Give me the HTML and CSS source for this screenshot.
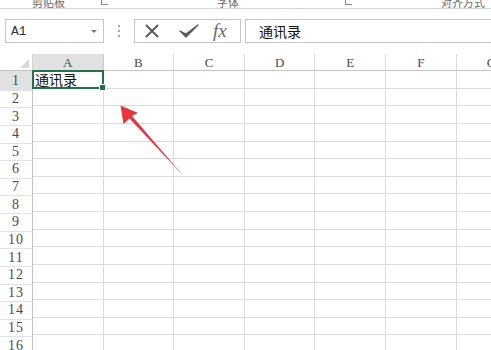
FILE: index.html
```html
<!DOCTYPE html>
<html>
<head>
<meta charset="utf-8">
<link rel="stylesheet" href="styles.css">
</head>
<body>
<div class="ribbon">
  <span class="grp g1">剪贴板</span>
  <span class="launch l1"></span>
  <span class="grp g2">字体</span>
  <span class="launch l2"></span>
  <span class="grp g3">对齐方式</span>
</div>
<div class="fbar">
  <div class="namebox"><span class="ref">A1</span><span class="dd"></span></div>
  <div class="dots"><i></i><i></i><i></i></div>
  <div class="btns">
    <svg class="ico-x" width="16" height="14" viewBox="0 0 16 14"><path d="M2 1 L14 13 M14 1 L2 13" stroke="#5a5a5a" stroke-width="2" fill="none"/></svg>
    <svg class="ico-ok" width="20" height="14" viewBox="0 0 20 14"><path d="M1 7 L7 13 L19 1 L7 10 Z" fill="#5a5a5a" stroke="#5a5a5a" stroke-width="1.2" stroke-linejoin="round"/></svg>
    <span class="fx">fx</span>
  </div>
  <div class="input">通讯录</div>
</div>
<div class="sheet">
  <div class="colhead">
    <div class="corner"><span class="tri"></span></div>
    <div class="ch sel">A</div>
    <div class="ch">B</div>
    <div class="ch">C</div>
    <div class="ch">D</div>
    <div class="ch">E</div>
    <div class="ch">F</div>
    <div class="ch">G</div>
  </div>
  <div class="body">
    <div class="rowhead">
      <div class="rh sel">1</div><div class="rh">2</div><div class="rh">3</div><div class="rh">4</div>
      <div class="rh">5</div><div class="rh">6</div><div class="rh">7</div><div class="rh">8</div>
      <div class="rh">9</div><div class="rh">10</div><div class="rh">11</div><div class="rh">12</div>
      <div class="rh">13</div><div class="rh">14</div><div class="rh">15</div><div class="rh">16</div>
    </div>
    <div class="cells">
      <div class="active">通讯录<span class="handle"></span></div>
    </div>
  </div>
</div>
<svg class="arrow" width="491" height="350" viewBox="0 0 491 350">
  <polygon points="120.5,105.5 123.5,124 129.5,118.5 183.5,176 132,116 138,113" fill="#e8343c"/>
</svg>
</body>
</html>
```
FILE: styles.css
```css
html, body {
  margin: 0;
  padding: 0;
}
body {
  width: 491px;
  height: 350px;
  overflow: hidden;
  background: #fff;
  position: relative;
  font-family: "Noto Sans CJK SC", "DejaVu Sans", sans-serif;
}
.ribbon {
  height: 8px;
  border-bottom: 1px solid #d6d6d6;
  position: relative;
  overflow: hidden;
  display: flex;
  align-items: flex-end;
}
.grp {
  font-size: 11px;
  line-height: 11px;
  color: #6a6a6a;
  margin-bottom: 0;
  white-space: nowrap;
}
.g1 { margin-left: 32px; }
.launch {
  width: 6px;
  height: 5px;
  border-left: 1px solid #888;
  border-bottom: 1px solid #888;
  margin-bottom: 3px;
}
.l1 { margin-left: 36px; }
.g2 { margin-left: 109px; }
.l2 { margin-left: 106px; }
.g3 { margin-left: 89px; }

.fbar {
  margin-top: 10px;
  height: 24px;
  display: flex;
  align-items: stretch;
}
.namebox {
  margin-left: 5px;
  width: 97px;
  border: 1px solid #c6c6c6;
  display: flex;
  align-items: center;
  justify-content: space-between;
}
.ref {
  font-family: "Liberation Mono", monospace;
  font-size: 13px;
  color: #333;
  margin-left: 5px;
}
.dd {
  width: 0;
  height: 0;
  border-left: 3px solid transparent;
  border-right: 3px solid transparent;
  border-top: 3px solid #777;
  margin-right: 6px;
}
.dots {
  width: 30px;
  display: flex;
  flex-direction: column;
  align-items: center;
  justify-content: center;
  gap: 3px;
}
.dots i {
  display: block;
  width: 2px;
  height: 2px;
  background: #a8a8a8;
}
.btns {
  width: 105px;
  border: 1px solid #c6c6c6;
  display: flex;
  align-items: center;
}
.ico-x { margin-left: 9px; }
.ico-ok { margin-left: 19px; }
.fx {
  margin-left: 14px;
  font-family: "Liberation Serif", serif;
  font-style: italic;
  font-size: 19px;
  color: #6a6a6a;
  line-height: 1;
  margin-top: -2px;
}
.input {
  margin-left: 4px;
  flex: 1;
  border: 1px solid #c6c6c6;
  border-right: none;
  font-size: 14px;
  color: #111;
  padding-left: 13px;
  display: flex;
  align-items: center;
}

.sheet {
  margin-top: 11px;
  overflow: hidden;
}
.colhead {
  height: 16px;
  display: flex;
  overflow: hidden;
  border-bottom: 1px solid #c4c4c4;
}
.corner {
  width: 32px;
  flex: none;
  border-right: 1px solid #d6d6d6;
  position: relative;
}
.tri {
  position: absolute;
  right: 3px;
  bottom: 2px;
  width: 0;
  height: 0;
  border-left: 9px solid transparent;
  border-bottom: 9px solid #d9d9d9;
}
.ch {
  flex: 0 0 69.6px;
  display: flex;
  justify-content: center;
  align-items: center;
  border-right: 1px solid #dcdcdc;
  font-family: "Liberation Serif", serif;
  font-size: 13px;
  color: #4a4a4a;
  padding-top: 2px;
  box-sizing: content-box;
}
.ch.sel {
  background: #e1e1e1;
  color: #2c5b41;
  border-right-color: #c8c8c8;
}
.body {
  display: flex;
}
.rowhead {
  width: 32px;
  border-right: 1px solid #c4c4c4;
  flex: none;
}
.rh {
  height: 16.625px;
  border-bottom: 1px solid #e2e2e2;
  display: flex;
  justify-content: center;
  align-items: center;
  padding-top: 2px;
  box-sizing: content-box;
  margin-bottom: -2px;
  font-family: "Liberation Serif", serif;
  font-size: 14px;
  color: #4a4a4a;
  letter-spacing: 1px;
}
.rh.sel {
  background: #e1e1e1;
  color: #2c5b41;
}
.cells {
  flex: 1;
  height: 290px;
  background:
    repeating-linear-gradient(to right, transparent 0 69.6px, #dadada 69.6px 70.6px),
    repeating-linear-gradient(to bottom, transparent 0 16.625px, #dadada 16.625px 17.625px);
}
.active {
  position: relative;
  width: 71.6px;
  height: 18.625px;
  margin-left: -1px;
  margin-top: -1px;
  box-sizing: border-box;
  border: 2px solid #217346;
  background: #fff;
  font-size: 14px;
  line-height: 15px;
  color: #111;
  padding-left: 1px;
}
.handle {
  position: absolute;
  right: -4px;
  bottom: -4px;
  width: 5px;
  height: 5px;
  background: #217346;
  border: 1px solid #fff;
}
.arrow {
  position: absolute;
  left: 0;
  top: 0;
  pointer-events: none;
}
```
